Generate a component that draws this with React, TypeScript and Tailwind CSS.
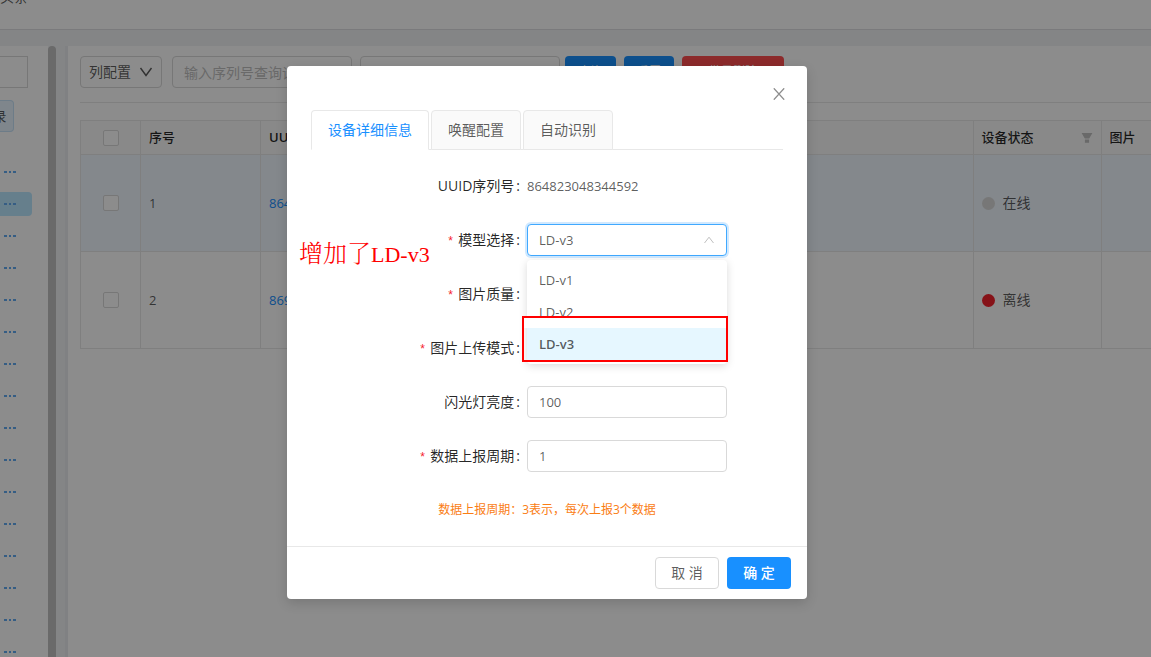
import { useState } from 'react';

const sans = "font-['Open_Sans','Noto_Sans_CJK_SC',sans-serif]";

const devices = [
  { no: 1, uuid: '864823048344592', online: true, label: '在线' },
  { no: 2, uuid: '869', online: false, label: '离线' },
];

const groups = Array.from({ length: 16 }, (_, i) => i);
const models = ['LD-v1', 'LD-v2', 'LD-v3'];
const tabs = ['设备详细信息', '唤醒配置', '自动识别'];

export default function App() {
  return (
    <div className={`relative flex h-screen flex-col overflow-hidden bg-[#f0f2f5] text-sm text-black/65 ${sans}`}>
      <header className="flex h-[30px] shrink-0 items-start border-b border-[#dfdfe2] bg-white">
        <span className="-mt-[15px] leading-6">头条</span>
      </header>
      <div className="flex min-h-0 flex-1 pt-4">
        <Sidebar />
        <DeviceList />
      </div>
      <div className="absolute inset-0 flex items-start justify-center bg-black/45 px-4 pt-[66px] pr-[73px]">
        <DeviceModal />
      </div>
    </div>
  );
}

function Sidebar() {
  return (
    <aside className="flex shrink-0">
      <div className="w-12 overflow-hidden bg-white">
        <input aria-label="搜索分组" className="mt-[10px] block h-8 w-7 border border-l-0 border-[#d9d9d9] bg-white" />
        <button className="mt-3 block h-8 w-[14px] overflow-hidden rounded-r border border-l-0 border-[#c6e2f7] bg-[#e8f4ff]">
          <span className="-ml-2 block w-4 text-[13px]">录</span>
        </button>
        <ul className="mt-7 flex flex-col gap-2">
          {groups.map((i) => (
            <li key={i} className={`flex h-6 w-8 items-center rounded-r-sm pl-1 ${i === 1 ? 'bg-[#bae7ff]' : ''}`}>
              <a href="#" aria-label="更多">
                <svg width="12" height="2" viewBox="0 0 12 2" fill="#62aaf0">
                  <path d="M0 0h3v2H0zM5 0h2v2H5zM9 0h3v2H9z" />
                </svg>
              </a>
            </li>
          ))}
        </ul>
      </div>
      <div className="w-2 rounded-t bg-[#c1c1c1]" />
      <div className="w-3 border-r-3 border-[#e9ebef]" />
    </aside>
  );
}

function DeviceList() {
  return (
    <main className="min-w-0 flex-1 bg-white pt-[10px] pl-3">
      <div className="flex h-[47px] items-start border-b border-[#e8e8e8]">
        <button className="flex h-8 w-[82px] items-center justify-between rounded border border-[#d9d9d9] px-2">
          列配置
          <ChevronDown />
        </button>
        <input
          aria-label="序列号"
          placeholder="输入序列号查询设备"
          className="ml-[10px] h-8 w-[180px] rounded border border-[#d9d9d9] px-[11px] placeholder:text-[#bfbfbf]"
        />
        <input
          aria-label="位置"
          placeholder="位置"
          className="ml-2 h-8 w-[200px] rounded border border-[#d9d9d9] px-[11px] placeholder:text-[#bfbfbf]"
        />
        <button className="ml-[5px] h-8 w-[51px] rounded bg-[#1890ff] text-xs text-white">查询</button>
        <button className="ml-2 h-8 w-[50px] rounded bg-[#1890ff] text-xs text-white">重置</button>
        <button className="ml-2 h-8 w-[102px] rounded bg-[#ff4d4f] text-xs text-white">批量删除</button>
      </div>
      <table className="mt-[17px] w-full table-fixed border-collapse text-left">
        <thead className="bg-[#fafafa] text-[13px] text-black/85">
          <tr className="h-[34px]">
            <th className="w-[60px] border border-[#e8e8e8]">
              <Checkbox label="全选" />
            </th>
            <th className="w-[120px] border border-[#e8e8e8] px-2 font-medium">序号</th>
            <th className="border border-[#e8e8e8] px-2 font-semibold">UUID</th>
            <th className="w-[128px] border border-[#e8e8e8] px-2 font-medium">
              <span className="flex items-center justify-between">
                设备状态
                <svg width="12" height="12" viewBox="0 0 12 12" fill="#bfbfbf">
                  <path d="M.6 1h10.8L8.2 6.4H3.8zM3.9 7.4h4.2v3.4H3.9z" />
                </svg>
              </span>
            </th>
            <th className="w-[50px] border border-r-0 border-[#e8e8e8] px-2 font-medium">图片</th>
          </tr>
        </thead>
        <tbody>
          {devices.map((d) => (
            <tr key={d.no} className={`h-[97px] ${d.no === 1 ? 'bg-[#f0f7ff]' : ''}`}>
              <td className="border border-[#e8e8e8]">
                <Checkbox label={`选择 ${d.no}`} />
              </td>
              <td className="border border-[#e8e8e8] px-2 text-[13px]">{d.no}</td>
              <td className="border border-[#e8e8e8] px-2 text-[13px]">
                <a href="#" className="text-[#1890ff]">{d.uuid}</a>
              </td>
              <td className="border border-[#e8e8e8] px-2">
                <span className="flex items-center gap-2">
                  <span className={`size-[13px] rounded-full ${d.online ? 'bg-[#d9d9d9]' : 'bg-[#f5222d]'}`} />
                  {d.label}
                </span>
              </td>
              <td className="border border-r-0 border-[#e8e8e8]" />
            </tr>
          ))}
        </tbody>
      </table>
    </main>
  );
}

function DeviceModal() {
  const [model, setModel] = useState('LD-v3');
  const [flash, setFlash] = useState('100');
  const [period, setPeriod] = useState('1');

  return (
    <section role="dialog" aria-label="设备详细信息" className="relative w-full max-w-[520px] rounded bg-white shadow-[0_4px_12px_rgba(0,0,0,0.15)]">
      <button aria-label="关闭" className="absolute top-[22px] right-[22px] text-black/45">
        <svg width="12" height="12" viewBox="0 0 12 12" className="block" fill="none" stroke="currentColor" strokeWidth="1.3">
          <path d="M.8.3 11.2 11.7M11.2.3.8 11.7" />
        </svg>
      </button>
      <div className="px-6 pt-11 pb-[26px]">
        <nav className="flex h-10 gap-[2px] border-b border-[#e8e8e8]">
          {tabs.map((tab, i) => (
            <button
              key={tab}
              className={`h-10 rounded-t border border-[#e8e8e8] px-4 ${i === 0 ? 'border-b-white bg-white text-[#1890ff]' : 'bg-[#fafafa]'}`}
            >
              {tab}
            </button>
          ))}
        </nav>

        <form className="mt-5 flex flex-col gap-[22px]">
          <Field label="UUID序列号">
            <span className="text-[13px]">864823048344592</span>
          </Field>
          <Field label="模型选择" id="model" required>
            <div className="relative">
              <select
                id="model"
                value={model}
                onChange={(e) => setModel(e.target.value)}
                className="h-8 w-full appearance-none rounded border border-[#40a9ff] bg-white px-[11px] text-[13px] shadow-[0_0_0_2px_rgba(24,144,255,0.2)] outline-none"
              >
                {models.map((m) => (
                  <option key={m}>{m}</option>
                ))}
              </select>
              <svg width="10" height="8" viewBox="0 0 10 8" fill="none" stroke="#bfbfbf" className="pointer-events-none absolute top-3 right-[13px]">
                <path d="M.5 7 5 1.2 9.5 7" />
              </svg>
              <ul className="absolute inset-x-0 top-9 z-10 rounded bg-white py-1 text-[13px] shadow-[0_2px_8px_rgba(0,0,0,0.15)]">
                {models.map((m) => (
                  <li key={m} className={`flex h-8 items-center px-3 ${m === model ? 'bg-[#e6f7ff] font-semibold' : ''}`}>
                    {m}
                  </li>
                ))}
              </ul>
              <Highlight />
            </div>
          </Field>
          <Field label="图片质量" required />
          <Field label="图片上传模式" required />
          <Field label="闪光灯亮度" id="flash">
            <TextInput id="flash" value={flash} onChange={setFlash} />
          </Field>
          <Field label="数据上报周期" id="period" required>
            <TextInput id="period" value={period} onChange={setPeriod} />
          </Field>
        </form>
        <p className="mt-7 text-center text-xs leading-5 text-[#fa7d14]">数据上报周期：3表示，每次上报3个数据</p>
      </div>
      <footer className="flex justify-end gap-2 border-t border-[#e8e8e8] px-4 py-[10px]">
        <button className="h-8 w-16 rounded border border-[#d9d9d9]">取 消</button>
        <button className="h-8 w-16 rounded bg-[#1890ff] font-medium text-white">确 定</button>
      </footer>
      <p className="absolute top-[170px] left-3 font-['Noto_Serif_CJK_SC','Noto_Sans_CJK_SC',serif] text-2xl leading-8 font-light text-[#ff0000]">
        增加了<span className="font-['Liberation_Serif',serif] text-[22px]">LD-v3</span>
      </p>
    </section>
  );
}

// Red frame around the newly added option
function Highlight() {
  return (
    <div className="pointer-events-none absolute -right-px -left-[5px] top-[92px] z-20 h-[46px] border-2 border-[#ff0000]">
      <div className="h-[10px] bg-white" />
    </div>
  );
}

type FieldProps = { label: string; id?: string; required?: boolean; children?: React.ReactNode };

function Field({ label, id, required, children }: FieldProps) {
  return (
    <div className="flex h-8 items-center">
      <label htmlFor={id} className="w-[216px] pr-[7px] text-right text-black/85">
        {required && <span className="mr-1 font-['Liberation_Mono',monospace] text-xs text-[#f5222d]">*</span>}
        {label}
        <span className="ml-[2px]">:</span>
      </label>
      <div className="w-[200px]">{children}</div>
    </div>
  );
}

function TextInput({ id, value, onChange }: { id: string; value: string; onChange: (v: string) => void }) {
  return (
    <input
      id={id}
      value={value}
      onChange={(e) => onChange(e.target.value)}
      className="block h-8 w-full rounded border border-[#d9d9d9] px-[11px] text-[13px]"
    />
  );
}

function Checkbox({ label }: { label: string }) {
  return (
    <input
      type="checkbox"
      aria-label={label}
      className="mx-auto block size-4 appearance-none rounded-xs border border-[#d9d9d9] bg-white"
    />
  );
}

function ChevronDown() {
  return (
    <svg width="14" height="10" viewBox="0 0 14 10" fill="none" stroke="currentColor" strokeWidth="1.4">
      <path d="M1.5 1 7 8.5 12.5 1" />
    </svg>
  );
}
